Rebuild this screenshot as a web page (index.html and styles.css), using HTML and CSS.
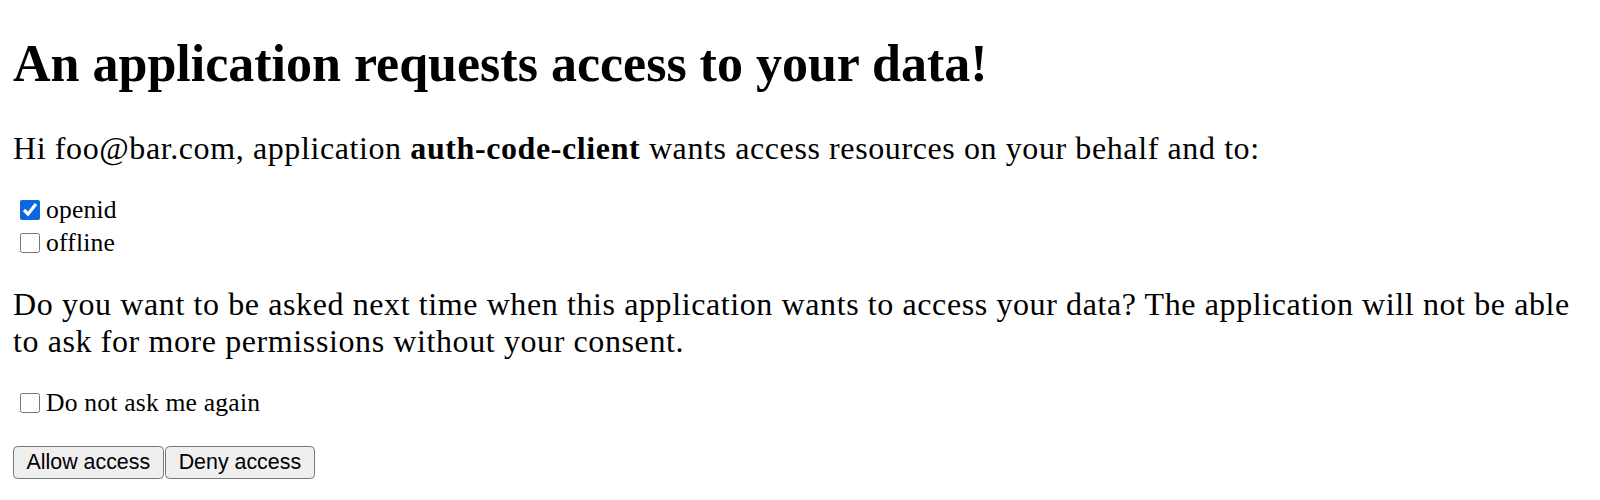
FILE: index.html
```html
<!DOCTYPE html>
<html>
<head>
<meta charset="utf-8">
<title>Consent</title>
<link rel="stylesheet" href="styles.css">
</head>
<body class="page">
<h1 class="title">An application requests access to your data!</h1>
<form class="consent">
<p class="text intro">Hi foo@bar.com, application <strong>auth-code-client</strong> wants access resources on your behalf and to:</p>
<div class="scopes">
<div class="scope"><input class="box" type="checkbox" id="openid" checked><label class="lbl" for="openid">openid</label></div>
<div class="scope"><input class="box" type="checkbox" id="offline"><label class="lbl" for="offline">offline</label></div>
</div>
<p class="text question">Do you want to be asked next time when this application wants to access your data? The application will not be able to ask for more permissions without your consent.</p>
<div class="scope remember"><input class="box" type="checkbox" id="remember"><label class="lbl" for="remember">Do not ask me again</label></div>
<div class="actions"><button class="btn" type="button">Allow access</button><button class="btn" type="button">Deny access</button></div>
</form>
</body>
</html>
```
FILE: styles.css
```css
html, body {
  margin: 0;
  padding: 0;
}
.page {
  padding: 34px 13px 0;
  font-family: "Liberation Serif", "Times New Roman", serif;
  font-size: 25.6px;
  color: #000;
  background: #fff;
}
.title {
  font-size: 52px;
  line-height: 60px;
  font-weight: bold;
  margin: 0 0 35.8px;
}
.consent {
  margin: 0;
}
.text {
  font-size: 32px;
  line-height: 36.8px;
  letter-spacing: 0.6px;
  margin: 0;
}
.intro {
  margin-bottom: 27px;
}
.scopes {
  display: flex;
  flex-direction: column;
  margin-bottom: 26.6px;
}
.scope {
  display: flex;
  align-items: center;
}
.remember {
  margin: 27px 0 26.8px;
}
.box {
  width: 20px;
  height: 20px;
  margin: 6.4px 6px 6.4px 7px;
  accent-color: #0b66e4;
}
.lbl {
  font-size: 25.6px;
  line-height: 29.4px;
  letter-spacing: 0.2px;
}
.actions {
  display: flex;
  gap: 1.5px;
}
.btn {
  font-family: "Liberation Sans", Arial, sans-serif;
  font-size: 21.4px;
  padding: 0 12.5px;
  height: 33px;
  background: #efefef;
  border: 1.6px solid #767676;
  border-radius: 4.5px;
  color: #000;
}
```
